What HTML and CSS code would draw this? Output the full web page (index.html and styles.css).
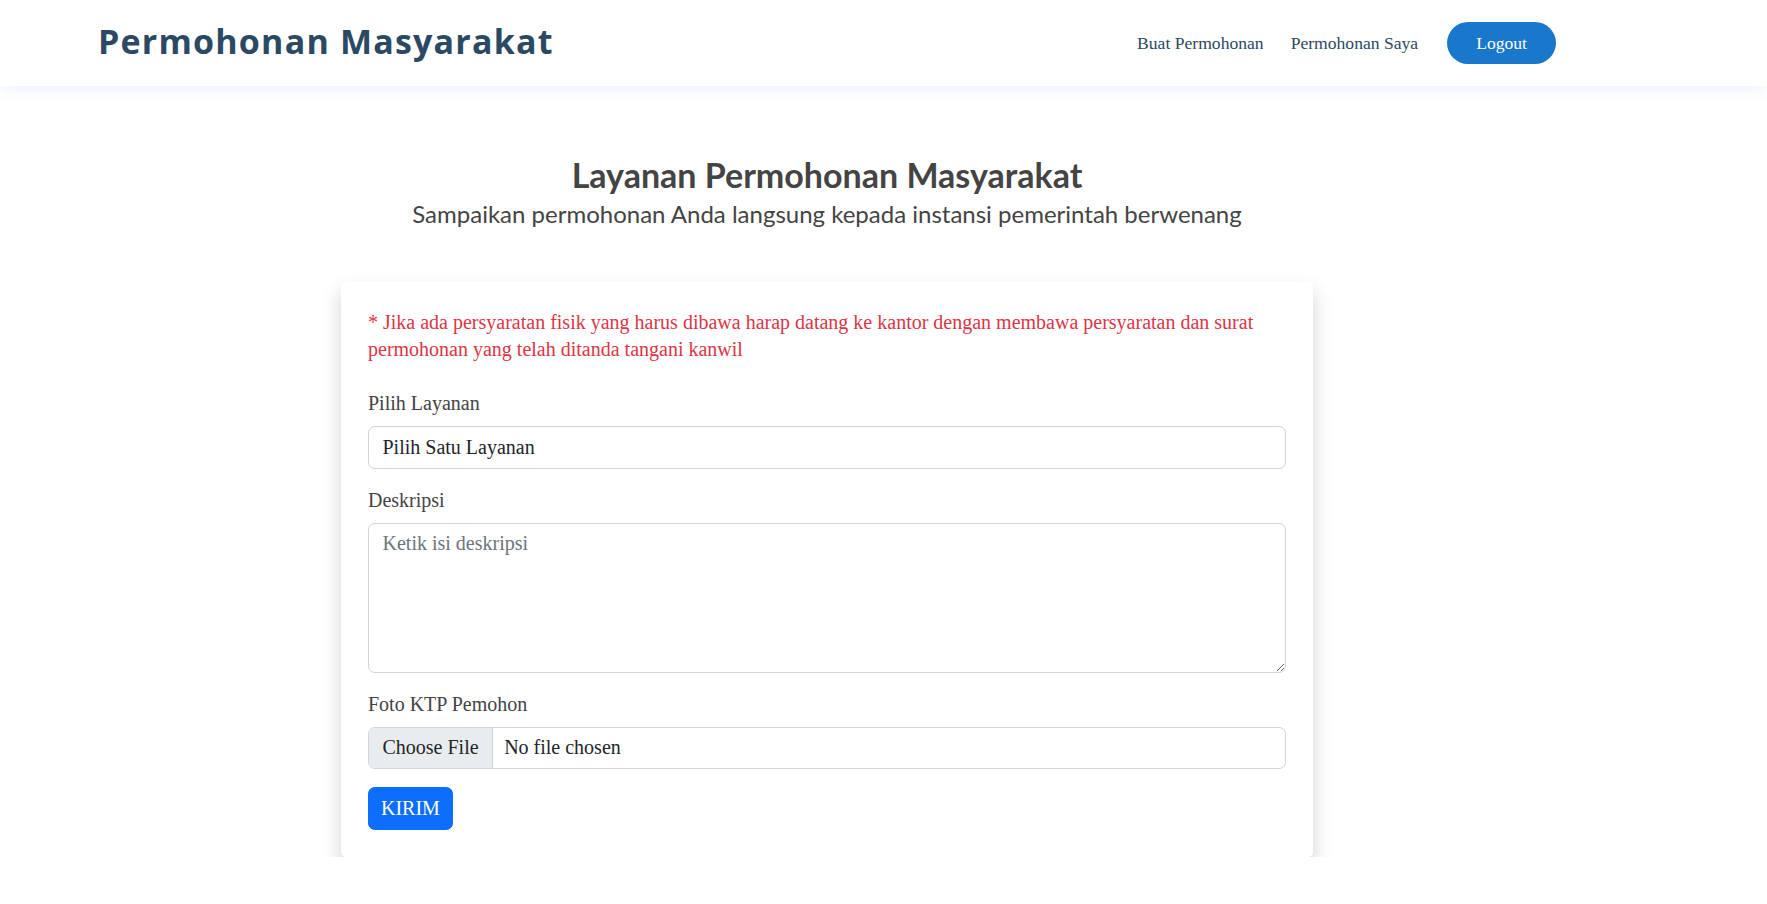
FILE: index.html
```html
<!DOCTYPE html>
<html lang="id">
<head>
<meta charset="utf-8">
<title>Permohonan Masyarakat</title>
<link rel="stylesheet" href="styles.css">
</head>
<body>
<header class="site-header">
  <div class="header-inner">
    <h1 class="logo">Permohonan Masyarakat</h1>
    <nav class="nav">
      <a class="nav-link" href="#">Buat Permohonan</a>
      <a class="nav-link" href="#">Permohonan Saya</a>
      <a class="btn-logout" href="#">Logout</a>
    </nav>
  </div>
</header>
<main class="main">
  <div class="column">
    <div class="section-title">
      <h2>Layanan Permohonan Masyarakat</h2>
      <p>Sampaikan permohonan Anda langsung kepada instansi pemerintah berwenang</p>
    </div>
    <div class="card">
      <form class="form">
        <p class="note">* Jika ada persyaratan fisik yang harus dibawa harap datang ke kantor dengan membawa persyaratan dan surat permohonan yang telah ditanda tangani kanwil</p>
        <div class="field">
          <label class="form-label" for="layanan">Pilih Layanan</label>
          <select class="form-control" id="layanan"><option>Pilih Satu Layanan</option></select>
        </div>
        <div class="field">
          <label class="form-label" for="deskripsi">Deskripsi</label>
          <textarea class="form-control textarea" id="deskripsi" placeholder="Ketik isi deskripsi"></textarea>
        </div>
        <div class="field">
          <label class="form-label" for="ktp">Foto KTP Pemohon</label>
          <input class="form-control file" type="file" id="ktp">
        </div>
        <button class="btn-submit" type="button">KIRIM</button>
      </form>
    </div>
  </div>
</main>
</body>
</html>
```

FILE: styles.css
```css
html, body {
  margin: 0;
  padding: 0;
}
body {
  font-family: "Liberation Serif", "Times New Roman", serif;
  color: #444444;
  background: #ffffff;
}
.site-header {
  position: relative;
  z-index: 2;
  height: 86px;
  background: #ffffff;
  box-shadow: 0 2px 15px rgba(25, 119, 204, 0.1);
}
.header-inner {
  height: 100%;
  display: flex;
  align-items: center;
  justify-content: space-between;
  padding: 0 211px 0 98px;
}
.logo {
  margin: 0 0 5px;
  font-family: "Open Sans", sans-serif;
  font-weight: 700;
  font-size: 34px;
  letter-spacing: 1.2px;
  color: #2c4964;
  line-height: 1;
}
.nav {
  display: flex;
  align-items: center;
}
.nav-link {
  font-size: 17.6px;
  color: #2c4964;
  text-decoration: none;
  margin-right: 27px;
}
.btn-logout {
  margin-left: 2px;
  background: #1977cc;
  color: #ffffff;
  text-decoration: none;
  border-radius: 50px;
  padding: 0 29px;
  height: 42px;
  line-height: 42px;
  font-size: 17.6px;
}
.column {
  width: 972px;
  margin-left: 341px;
}
.section-title {
  text-align: center;
  padding-top: 67px;
  margin-bottom: 50px;
}
.section-title h2 {
  margin: 0;
  font-family: "Lato", sans-serif;
  font-weight: 700;
  font-size: 34px;
  line-height: 43px;
  color: #444444;
}
.section-title p {
  margin: 0;
  font-family: "Lato", sans-serif;
  font-size: 24px;
  line-height: 36px;
  color: #444444;
}
.card {
  background: #ffffff;
  border-radius: 5px;
  box-shadow: 0 10px 20px rgba(0, 0, 0, 0.18);
  padding: 27px;
}
.form {
  margin: 0;
}
.note {
  margin: 0 0 27px;
  color: #dc3545;
  font-size: 20px;
  line-height: 27px;
}
.field {
  margin-bottom: 18px;
}
.form-label {
  display: block;
  margin-bottom: 9px;
  font-size: 20px;
  line-height: 27px;
  color: #444444;
}
.form-control {
  display: block;
  width: 100%;
  box-sizing: border-box;
  margin: 0;
  padding: 6.75px 13.5px;
  font-family: "Liberation Serif", "Times New Roman", serif;
  font-size: 20px;
  line-height: 27px;
  color: #212529;
  background: #ffffff;
  border: 1px solid #ced4da;
  border-radius: 6.75px;
  appearance: none;
  -webkit-appearance: none;
  outline: none;
}
.textarea {
  height: 150px;
  resize: vertical;
}
.textarea::placeholder {
  color: #6c757d;
}
.file {
  overflow: hidden;
}
.file::file-selector-button {
  padding: 6.75px 13.5px;
  margin: -6.75px 11px -6.75px -13.5px;
  font-family: "Liberation Serif", "Times New Roman", serif;
  font-size: 20px;
  line-height: 27px;
  color: #212529;
  background: #e9ecef;
  border: 0;
  border-right: 1px solid #ced4da;
  border-radius: 0;
}
.btn-submit {
  display: inline-block;
  padding: 6.75px 12px;
  font-family: "Liberation Serif", "Times New Roman", serif;
  font-size: 20px;
  line-height: 27px;
  color: #ffffff;
  background: #0d6efd;
  border: 1px solid #0d6efd;
  border-radius: 6.75px;
}
```
